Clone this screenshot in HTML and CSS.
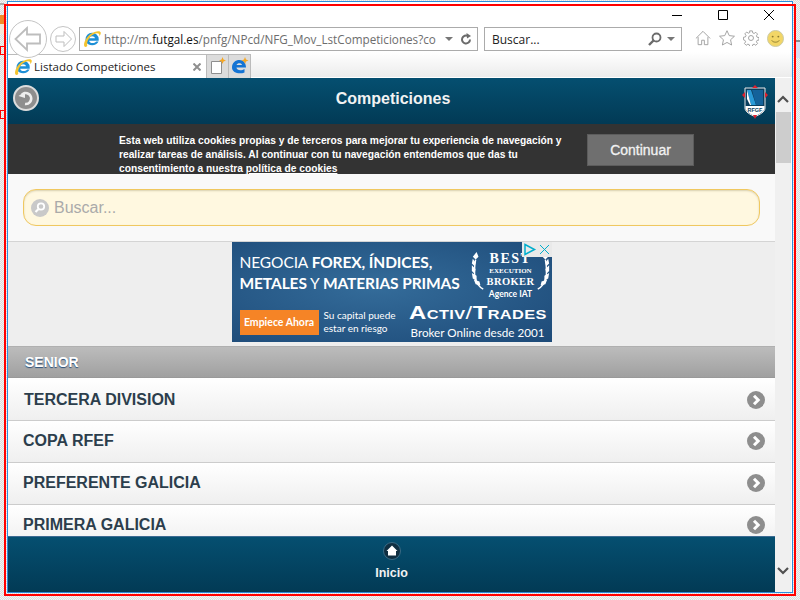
FILE: index.html
```html
<!DOCTYPE html>
<html lang="es">
  <head>
    <meta charset="UTF-8" />
    <title>Listado Competiciones</title>
    <link rel="stylesheet" href="styles.css">
  </head>
  <body>
    <svg class="defs" width="0" height="0">
      <symbol id="ie" viewBox="0 0 18 18">
        <path d="M2.500 9.500a6.600 6.600 0 0 1 13.200-.4v1.600H6.200c.2 2.800 4.900 3.200 7 .8h2.400c-2.100 5-11 5-13-.3a6 6 0 0 1-.1-1.700z M6.200 8.200h5.800c-.3-2.700-5.400-2.700-5.800 0z" fill="#1d8fd6" fill-rule="evenodd"/>
        <path d="M1.500 16.500C-.5 14 4 4.500 11.500 2c3-1 5.800-1 6.200.6.300 1.100-.5 2.700-1.400 3.700.3-2-.5-3.300-2.800-3C8 4.200 3 11 4.300 15.800c-.9 1.300-2.100 1.500-2.800.7z" fill="#f4c430"/>
      </symbol>
      <symbol id="go" viewBox="0 0 18 18">
        <circle cx="9" cy="9" r="9" fill="#8e8e8e"/>
        <path d="M7 4.800 11.200 9 7 13.200" fill="none" stroke="#fff" stroke-width="3"/>
      </symbol>
    </svg>

    <div class="window">
      <div class="chrome">
        <div class="caption">
          <svg class="ctl" viewBox="0 0 10 10"><path d="M0 5.500h10" stroke="#000"/></svg>
          <svg class="ctl" viewBox="0 0 10 10"><path d="M.5.500h9v9h-9z" fill="none" stroke="#000"/></svg>
          <svg class="ctl" viewBox="0 0 10 10"><path d="M0 0l10 10M10 0 0 10" stroke="#000"/></svg>
        </div>

        <div class="nav">
          <svg class="back" viewBox="0 0 38 38">
            <circle cx="19" cy="19" r="18.500" fill="#fff" stroke="#c4c4c4"/>
            <path d="M18 8 6.500 19 18 30v-6.500h13v-9H18z" fill="#fff" stroke="#bdbdbd" stroke-width="1.800"/>
          </svg>
          <svg class="fwd" viewBox="0 0 26 26">
            <circle cx="13" cy="13" r="12.500" fill="#fff" stroke="#c4c4c4"/>
            <path d="M14 5.500 21.500 13 14 20.500V16H6v-6h8z" fill="#fff" stroke="#bdbdbd"/>
          </svg>
          <div class="address">
            <svg class="ie-icon"><use href="#ie"/></svg>
            <span class="url">http://m.<b>futgal.es</b>/pnfg/NPcd/NFG_Mov_LstCompeticiones?co</span>
            <span class="drop"></span>
            <svg class="reload" viewBox="0 0 12 12"><path d="M10 6.500a4 4 0 1 1-2-3.500" fill="none" stroke="#6b6b6b" stroke-width="2"/><path d="M6.500 0 11 3 7 5.500z" fill="#6b6b6b"/></svg>
          </div>
          <div class="search-box">
            <span class="search-label">Buscar...</span>
            <svg class="lens" viewBox="0 0 14 14"><circle cx="8.500" cy="5.500" r="4" fill="none" stroke="#6b6b6b" stroke-width="1.800"/><path d="M5.500 8.500 1 13" stroke="#6b6b6b" stroke-width="2.400"/></svg>
            <span class="drop"></span>
          </div>
          <div class="tools">
            <svg viewBox="0 0 18 18"><path d="M1 9.500 9 1.500l8 8M3.500 8v8.500h4v-5h3v5h4V8" fill="#fff" stroke="#999"/></svg>
            <svg viewBox="0 0 18 18"><path d="m9 .8 2.500 5.500 5.900.7-4.400 4 1.200 5.900L9 14l-5.200 2.900L5 11 .6 7l5.900-.7z" fill="#fff" stroke="#999"/></svg>
            <svg viewBox="0 0 18 18"><circle cx="9" cy="9" r="2.800" fill="none" stroke="#999"/><path d="M7.500 1h3l.4 2.200 1.600.7 1.900-1.300 2 2-1.300 1.900.7 1.600 2.200.4v2.800l-2.200.4-.7 1.600 1.300 1.900-2 2-1.900-1.300-1.600.7-.4 2.200h-3l-.4-2.200-1.600-.7-1.900 1.300-2-2 1.300-1.900-.7-1.600L.5 11V8.200l2.200-.4.700-1.600-1.300-1.900 2-2 1.900 1.300 1.600-.7z" fill="none" stroke="#999"/></svg>
            <svg viewBox="0 0 18 18"><circle cx="9" cy="9" r="8.500" fill="#f2d667" stroke="#c9c9a8"/><circle cx="6" cy="7" r="1" fill="#8a7a30"/><circle cx="12" cy="7" r="1" fill="#8a7a30"/><path d="M5 11c1.500 2.500 6.500 2.500 8 0" fill="none" stroke="#8a7a30"/></svg>
          </div>
        </div>

        <div class="tabs">
          <div class="tab">
            <svg class="ie-icon"><use href="#ie"/></svg>
            <span class="tab-title">Listado Competiciones</span>
            <svg class="tab-close" viewBox="0 0 8 8"><path d="m.5.500 7 7m0-7-7 7" stroke="#8f8f8f" stroke-width="2"/></svg>
          </div>
          <div class="tab-btn">
            <svg viewBox="0 0 18 18"><path d="M2.500 4.500h10v12h-10z" fill="#fff" stroke="#8f8f8f"/><path d="m13.500 0 1 2.500 2.500 1-2.500 1-1 2.500-1-2.500-2.500-1 2.500-1z" fill="#f5a623"/></svg>
          </div>
          <div class="tab-btn">
            <svg viewBox="0 0 18 18"><path d="M1 10.500C1 5.500 4.500 3 8.500 3s6.500 3 6.500 7.500H5.500c.2 3.200 5 3.500 8 1.500v3.500c-5 2-12.500.5-12.500-5zM5.600 8H11c-.2-2.500-5-2.500-5.400 0z" fill="#1474d4" fill-rule="evenodd"/><path d="m14 0 1 2.500 2.500 1-2.500 1-1 2.500-1-2.500-2.500-1 2.500-1z" fill="#f5a623"/></svg>
          </div>
        </div>
      </div>

      <div class="viewport">
        <div class="page">
          <header class="topbar">
            <svg class="topbar-back" viewBox="0 0 26 26">
              <circle cx="13" cy="13" r="12" fill="#8e8e8e" stroke="#ddd" stroke-width="2"/>
              <path d="M9 9.500a5.500 5.500 0 1 1 3 9.500" fill="none" stroke="#eee" stroke-width="2.500"/>
              <path d="M5.500 11 12 6.500V13z" fill="#eee"/>
            </svg>
            <h1>Competiciones</h1>
            <svg class="crest" viewBox="0 0 26 34">
              <path d="M3 3h20v20c0 4-5 6.500-10 8.500C8 29.500 3 27 3 23z" fill="#0b3f5e" stroke="#e8e8e8"/>
              <path d="M3.500 21h19v2c0 3.500-4.500 6-9.500 8-5-2-9.500-4.500-9.500-8z" fill="#fff"/>
              <path d="M5 5h4l5 15H9z" fill="#2a9ad6"/>
              <path d="M5 5v9l3 6h1z" fill="#fff"/>
              <path d="M10 5h11v15h-7z" fill="#14629a"/>
              <path d="M13 0l3 3h-6z M0 10l3-3v6z M26 10l-3-3v6z M11 30h4l-2 4z" fill="#e0202c"/>
              <text x="13" y="27" class="crest-text">RFGF</text>
            </svg>
          </header>

          <div class="cookies">
            <p>Esta web utiliza cookies propias y de terceros para mejorar tu experiencia de navegación y<br>realizar tareas de análisis. Al continuar con tu navegación entendemos que das tu<br>consentimiento a nuestra <u>política de cookies</u></p>
            <button class="cookies-btn">Continuar</button>
          </div>

          <div class="filter">
            <div class="filter-input">
              <svg class="filter-icon" viewBox="0 0 18 18"><circle cx="9" cy="9" r="9" fill="#c9c9c9"/><circle cx="10" cy="7.500" r="3.200" fill="none" stroke="#fff" stroke-width="1.800"/><path d="M7.500 10 4.500 13" stroke="#fff" stroke-width="2.200"/></svg>
              <span>Buscar...</span>
            </div>
          </div>

          <div class="ad-wrap">
            <div class="ad">
              <div class="ad-top">
                <div class="ad-head">NEGOCIA <b>FOREX, ÍNDICES,</b><br><b>METALES</b> Y <b>MATERIAS PRIMAS</b></div>
                <div class="ad-badge">
                  <svg class="laurel" viewBox="0 0 14 40"><path d="M12 39C4 35 1 24 4 8" fill="none" stroke="#fff" stroke-width="1.500"/><path d="M4 8 1 5l4-5 2 5zM3 15 0 12l1-5 3 4zM3 23 0 20v-6l4 4zM5 30 1 28l-1-6 5 3zM9 35l-5-1-2-5 6 2z" fill="#fff"/></svg>
                  <div class="ad-best"><span class="best-1">BEST</span><span>EXECUTION</span><span class="best-2">BROKER</span></div>
                  <svg class="laurel flip" viewBox="0 0 14 40"><path d="M12 39C4 35 1 24 4 8" fill="none" stroke="#fff" stroke-width="1.500"/><path d="M4 8 1 5l4-5 2 5zM3 15 0 12l1-5 3 4zM3 23 0 20v-6l4 4zM5 30 1 28l-1-6 5 3zM9 35l-5-1-2-5 6 2z" fill="#fff"/></svg>
                  <div class="ad-iat">Agence IAT</div>
                </div>
              </div>
              <div class="ad-bottom">
                <span class="ad-cta">Empiece Ahora</span>
                <span class="ad-risk">Su capital puede<br>estar en riesgo</span>
                <div class="ad-brand">
                  <div class="ad-logo">Activ<i>/</i>Trades</div>
                  <div class="ad-since">Broker Online desde 2001</div>
                </div>
              </div>
              <div class="ad-marks">
                <svg viewBox="0 0 15 15"><path d="M3 2.500 12.500 7.500 3 12.500z" fill="none" stroke="#00aecd" stroke-width="1.500"/></svg>
                <svg viewBox="0 0 15 15"><path d="m3 3 9 9m0-9-9 9" stroke="#00aecd"/></svg>
              </div>
            </div>
          </div>

          <div class="section">SENIOR</div>
          <ul class="list">
            <li class="first">TERCERA DIVISION<svg class="go"><use href="#go"/></svg></li>
            <li>COPA RFEF<svg class="go"><use href="#go"/></svg></li>
            <li>PREFERENTE GALICIA<svg class="go"><use href="#go"/></svg></li>
            <li>PRIMERA GALICIA<svg class="go"><use href="#go"/></svg></li>
          </ul>
          <footer class="bottombar">
            <svg class="home" viewBox="0 0 18 18"><circle cx="9" cy="9" r="8.500" fill="#0f2f42" stroke="#3b6b85"/><path d="M9 3.500 14.500 9H13v4.500H5V9H3.500z" fill="#fff"/></svg>
            <span>Inicio</span>
          </footer>
        </div>

        <div class="scrollbar">
          <svg class="chev" viewBox="0 0 12 8"><path d="M1 7l5-5 5 5" fill="none" stroke="#505050" stroke-width="2.200"/></svg>
          <div class="thumb"></div>
          <svg class="chev chev-down" viewBox="0 0 12 8"><path d="M1 1l5 5 5-5" fill="none" stroke="#505050" stroke-width="2.200"/></svg>
        </div>
      </div>
    </div>

    <div class="red-frame"></div>
    <div class="red-mark mark-a"></div>
    <div class="red-mark mark-b"></div>
    <div class="behind-a"></div>
    <div class="behind-b"></div>
    <div class="behind-c"></div>
    <div class="behind-d"></div>
  </body>
</html>
```

FILE: styles.css
```css
html,
body {
  margin: 0;
  height: 100%;
  overflow: hidden;
}
body {
  position: relative;
  width: 800px;
  height: 600px;
  padding: 1px 0 0 7px;
  box-sizing: border-box;
  font-family: "Liberation Sans", Arial, sans-serif;
  background: #f4f4f4 repeating-conic-gradient(#dcdcdc 0 25%, #f4f4f4 0 50%) 0 0 / 2px 2px;
}
svg {
  display: block;
  flex: none;
}
.defs {
  position: absolute;
}

.window {
  width: 786px;
  height: 592px;
  box-sizing: border-box;
  border: 1px solid #2a8ddb;
  display: flex;
  flex-direction: column;
  background: #fff;
}

/* browser chrome */
.chrome {
  height: 76px;
  background: linear-gradient(#fff 50px, #ececec 75px);
  border-bottom: 1px solid #fff;
  box-sizing: border-box;
}
.caption {
  height: 25px;
  display: flex;
  justify-content: flex-end;
  gap: 36px;
  padding: 8px 18px 0 0;
  box-sizing: border-box;
}
.ctl {
  width: 10px;
  height: 10px;
}
.nav {
  height: 24px;
  display: flex;
  align-items: center;
  padding-left: 1px;
}
.back {
  width: 38px;
  height: 38px;
  margin-top: -1px;
  position: relative;
  z-index: 1;
}
.fwd {
  width: 26px;
  height: 26px;
  margin-left: 3px;
}
.address,
.search-box {
  height: 24px;
  box-sizing: border-box;
  border: 1px solid #ababab;
  background: #fff;
  display: flex;
  align-items: center;
}
.address {
  width: 399px;
  margin-left: 3px;
  padding: 0 5px 0 3px;
}
.ie-icon {
  width: 18px;
  height: 18px;
}
.url {
  margin-left: 3px;
  font-family: "Open Sans", sans-serif;
  font-size: 11.700px;
  color: #6d6d6d;
  white-space: nowrap;
  width: 338px;
}
.url b {
  font-weight: 400;
  color: #111;
}
.drop {
  width: 0;
  height: 0;
  border: 4px solid transparent;
  border-top: 4px solid #777;
  border-bottom: 0;
  margin-left: 6px;
}
.reload {
  width: 12px;
  height: 12px;
  margin-left: 7px;
}
.search-box {
  width: 198px;
  margin-left: 6px;
  padding: 0 6px 0 7px;
}
.search-label {
  flex: 1;
  font-family: "Open Sans", sans-serif;
  font-size: 12px;
  color: #222;
}
.lens {
  width: 14px;
  height: 14px;
}
.search-box .drop {
  margin-left: 5px;
}
.tools {
  display: flex;
  gap: 8px;
  margin-left: 13px;
  margin-top: -2px;
}
.tools svg {
  width: 16px;
  height: 16px;
}
.tools svg:last-child {
  width: 17px;
  height: 17px;
}

.tabs {
  height: 26px;
  margin-top: 1px;
  padding-top: 2px;
  display: flex;
  box-sizing: border-box;
}
.tab {
  width: 199px;
  height: 24px;
  box-sizing: border-box;
  background: #fff;
  border-top: 1px solid #bbb;
  border-right: 1px solid #bbb;
  display: flex;
  align-items: center;
  padding: 0 5px 0 6px;
}
.tab-title {
  flex: 1;
  margin-left: 2px;
  font-family: "Open Sans", sans-serif;
  font-size: 11.500px;
  color: #222;
}
.tab-close {
  width: 8px;
  height: 8px;
}
.tab-btn {
  width: 22px;
  height: 24px;
  box-sizing: border-box;
  background: #dcdcdc;
  border-top: 1px solid #bbb;
  border-right: 1px solid #bbb;
  padding: 2px;
}
.tab-btn svg {
  width: 18px;
  height: 18px;
}

/* web page area */
.viewport {
  flex: 1;
  display: flex;
  min-height: 0;
}
.page {
  width: 767px;
  display: flex;
  flex-direction: column;
  overflow: hidden;
  background: #fff;
}
.topbar {
  height: 46px;
  flex: none;
  display: flex;
  align-items: flex-start;
  padding: 7px 7px 0 5px;
  box-sizing: border-box;
  background: linear-gradient(#054f70, #023a55);
}
.topbar h1 {
  flex: 1;
  margin: 5px 0 0;
  padding-left: 5px;
  text-align: center;
  font-size: 16px;
  line-height: 18px;
  color: #f2f2f2;
}
.topbar-back {
  width: 26px;
  height: 26px;
}
.crest {
  width: 26px;
  height: 34px;
}
.crest-text {
  font: bold 5.500px "Liberation Sans", sans-serif;
  fill: #0b3f5e;
  text-anchor: middle;
}

.cookies {
  height: 50px;
  flex: none;
  box-sizing: border-box;
  background: #333;
  display: flex;
  padding: 10px 81px 0 111px;
  overflow: hidden;
}
.cookies p {
  width: 450px;
  margin: 0;
  flex: none;
  font-size: 10.240px;
  font-weight: bold;
  line-height: 14px;
  color: #fff;
  white-space: nowrap;
}
.cookies-btn {
  width: 107px;
  height: 32px;
  margin-left: 18px;
  flex: none;
  box-sizing: border-box;
  border: 1px solid #5c5c5c;
  background: #6f6f6f;
  color: #f2f2f2;
  font: 14px "Liberation Sans", sans-serif;
  -webkit-text-stroke: 0.3px #f2f2f2;
}

.filter {
  height: 68px;
  flex: none;
  box-sizing: border-box;
  padding: 15px 15px 0;
  background: #f9f9f9;
  border-bottom: 1px solid #d4d4d4;
}
.filter-input {
  height: 37px;
  box-sizing: border-box;
  border: 1px solid #f0c860;
  border-radius: 13px;
  background: #fff8e0;
  box-shadow: inset 0 1px 2px #d8d0b0;
  display: flex;
  align-items: center;
  padding-left: 7px;
  gap: 5px;
  font-size: 16px;
  color: #aaa;
}
.filter-icon {
  width: 18px;
  height: 18px;
}

.ad-wrap {
  height: 104px;
  flex: none;
  box-sizing: border-box;
  display: flex;
  justify-content: center;
  background: #eee;
}
.ad {
  position: relative;
  width: 320px;
  height: 100px;
  box-sizing: border-box;
  padding: 9px 6px 0 8px;
  background: radial-gradient(ellipse at 45% 45%, #346c9a, #1d4a78);
  color: #fff;
  font-family: Lato, sans-serif;
}
.ad-top {
  display: flex;
  justify-content: space-between;
  height: 59px;
}
.ad-head {
  margin-top: 1px;
  font-size: 15.500px;
  line-height: 21px;
  white-space: nowrap;
  letter-spacing: -0.1px;
}
.ad-badge {
  width: 76px;
  height: 52px;
  display: grid;
  grid-template-columns: 17px 1fr 17px;
  align-content: start;
  justify-items: center;
  margin-top: 1px;
}
.laurel {
  width: 17px;
  height: 38px;
}
.flip {
  transform: scaleX(-1);
}
.ad-best {
  font-family: "Liberation Serif", serif;
  font-weight: bold;
  display: flex;
  flex-direction: column;
  align-items: center;
  font-size: 7px;
  line-height: 10px;
  white-space: nowrap;
}
.best-1 {
  font-size: 14px;
  letter-spacing: 1.500px;
  line-height: 14px;
}
.best-2 {
  font-size: 10.500px;
  letter-spacing: 0.400px;
  line-height: 11px;
}
.ad-iat {
  grid-column: 1 / 4;
  margin-top: -1px;
  font-size: 8.500px;
  font-weight: bold;
}
.ad-bottom {
  display: flex;
  align-items: flex-start;
}
.ad-cta {
  width: 79px;
  height: 25px;
  margin-right: 5px;
  background: #f58426;
  font-size: 10.500px;
  font-weight: bold;
  line-height: 25px;
  text-align: center;
  white-space: nowrap;
}
.ad-risk {
  font-size: 10px;
  line-height: 13px;
  white-space: nowrap;
  margin-top: -1px;
}
.ad-brand {
  margin-left: auto;
  margin-top: -7px;
  width: 136px;
  white-space: nowrap;
  text-align: center;
}
.ad-logo {
  font-family: "Liberation Sans", sans-serif;
  font-weight: bold;
  font-variant: small-caps;
  font-size: 19px;
  line-height: 20px;
  letter-spacing: 0.300px;
  transform: scaleX(1.260);
}
.ad-logo i {
  font-weight: 400;
  font-style: normal;
}
.ad-since {
  font-size: 11.650px;
  line-height: 17px;
  margin-top: 1px;
}
.ad-marks {
  position: absolute;
  top: 0;
  right: 0;
  display: flex;
  background: #e9e9e9;
}
.ad-marks svg {
  width: 15px;
  height: 15px;
}

.section {
  height: 32px;
  flex: none;
  box-sizing: border-box;
  padding-left: 17px;
  background: linear-gradient(#bcbcbc, #a0a0a0);
  border-top: 1px solid #b0b0b0;
  border-bottom: 1px solid #999;
  color: #fff;
  font-size: 14px;
  font-weight: bold;
  line-height: 30px;
  text-shadow: 0 1px 1px #2a4f78;
}
.list {
  flex: 1;
  min-height: 0;
  margin: 0;
  padding: 0;
  list-style: none;
  overflow: hidden;
}
.list li {
  height: 42px;
  box-sizing: border-box;
  display: flex;
  align-items: center;
  justify-content: space-between;
  padding: 0 10px 2px 15px;
  border-bottom: 1px solid #ccc;
  background: linear-gradient(#fff, #efefef);
  color: #2c3e4c;
  font-size: 16px;
  font-weight: bold;
}
.list .first {
  height: 43px;
  padding: 1px 10px 0 16px;
}
.go {
  width: 18px;
  height: 18px;
}
.bottombar {
  height: 56px;
  flex: none;
  box-sizing: border-box;
  border-top: 1px solid #3c6a92;
  background: linear-gradient(#054f70, #023a55);
  display: flex;
  flex-direction: column;
  align-items: center;
  padding-top: 5px;
  color: #f2f2f2;
  font-size: 12.500px;
  font-weight: bold;
}
.home {
  width: 18px;
  height: 18px;
  margin-bottom: 6px;
}

.scrollbar {
  width: 16px;
  background: #f0f0f0;
  display: flex;
  flex-direction: column;
  align-items: flex-end;
}
.chev {
  width: 12px;
  height: 8px;
  margin: 17px 2px 9px 0;
}
.chev-down {
  margin: auto 2px 17px 0;
}
.thumb {
  width: 15px;
  height: 51px;
  background: #cdcdcd;
}

/* annotation rectangles laid over the capture */
.red-frame {
  position: absolute;
  left: 4px;
  top: 4px;
  width: 792px;
  height: 592px;
  box-sizing: border-box;
  border: 2px solid #f00;
}
.red-mark {
  position: absolute;
  left: 0;
  width: 6px;
  height: 9px;
  box-sizing: border-box;
  border: 1px solid #f00;
}
.mark-a {
  top: 46px;
}
.mark-b {
  top: 110px;
}

/* what shows of the window behind */
.behind-a {
  position: absolute;
  left: 0;
  top: 3px;
  width: 4px;
  height: 2px;
  background: #aaa;
}
.behind-b {
  position: absolute;
  left: 0;
  top: 15px;
  width: 4px;
  height: 9px;
  background: #f28c28;
}
.behind-c {
  position: absolute;
  left: 0;
  top: 24px;
  width: 4px;
  height: 10px;
  background: #f6e8d8;
}
.behind-d {
  position: absolute;
  right: 0;
  top: 40px;
  width: 4px;
  height: 18px;
  background: #dcdcf0;
  border-top: 2px solid #888;
  box-sizing: border-box;
}
```
